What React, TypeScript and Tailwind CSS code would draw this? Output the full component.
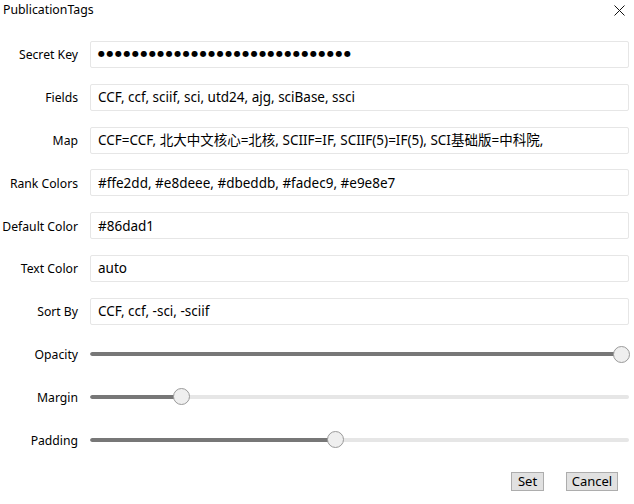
import React from "react";

const font = { fontFamily: '"Noto Sans", "Noto Sans CJK SC", sans-serif' };

function Field({ label, children }: { label: string; children: React.ReactNode }) {
  return (
    <div className="flex items-center h-[42.8px]">
      <div className="w-[78px] shrink-0 text-right text-[12.2px] pt-[2px] text-black whitespace-nowrap">{label}</div>
      <div className="ml-[12px] mr-[5px] flex-1 h-[27px] border border-[#e6e6e6] rounded-[2px] bg-white flex items-center px-[7px] text-[13.5px] text-black whitespace-nowrap overflow-hidden">
        {children}
      </div>
    </div>
  );
}

function Slider({ label, value }: { label: string; value: number }) {
  const center = 8 + value * 523;
  return (
    <div className="flex items-center h-[42.8px]">
      <div className="w-[78px] shrink-0 text-right text-[12.2px] pt-[2px] text-black whitespace-nowrap">{label}</div>
      <div className="ml-[12px] mr-[5px] flex-1 relative h-[18px] flex items-center">
        <div className="w-full h-[4px] rounded-full bg-[#e6e6e6] relative overflow-hidden">
          <div className="absolute left-0 top-0 h-full bg-[#777777] rounded-full" style={{ width: center }} />
        </div>
        <div
          className="absolute top-[0.5px] w-[17px] h-[17px] rounded-full bg-[#efefef] border border-[#9a9a9a]"
          style={{ left: center - 8.5 }}
        />
      </div>
    </div>
  );
}

export default function App() {
  const dots = "●".repeat(30);
  return (
    <div className="w-[634px] h-[504px] bg-white relative overflow-hidden" style={font}>
      <div className="h-[33.1px] flex items-start justify-between">
        <div className="pl-[3px] pt-[1px] text-[12.3px] text-black">PublicationTags</div>
        <svg className="mt-[5px] mr-[9px]" width="11" height="11" viewBox="0 0 11 11">
          <path d="M0.5 0.5 L10.5 10.5 M10.5 0.5 L0.5 10.5" stroke="#111" strokeWidth="1" fill="none" />
        </svg>
      </div>
      <Field label="Secret Key">
        <span className="text-[8px] tracking-[1.5px] leading-none" style={{ fontFamily: '"DejaVu Sans", sans-serif' }}>
          {dots}
        </span>
      </Field>
      <Field label="Fields">CCF, ccf, sciif, sci, utd24, ajg, sciBase, ssci</Field>
      <Field label="Map">CCF=CCF, 北大中文核心=北核, SCIIF=IF, SCIIF(5)=IF(5), SCI基础版=中科院,</Field>
      <Field label="Rank Colors">#ffe2dd, #e8deee, #dbeddb, #fadec9, #e9e8e7</Field>
      <Field label="Default Color">#86dad1</Field>
      <Field label="Text Color">auto</Field>
      <Field label="Sort By">CCF, ccf, -sci, -sciif</Field>
      <Slider label="Opacity" value={1} />
      <Slider label="Margin" value={0.159} />
      <Slider label="Padding" value={0.455} />
      <div className="flex justify-end gap-[22px] pr-[16px] mt-[10.6px]">
        <button className="w-[33px] h-[19px] bg-[#e1e1e1] border border-[#adadad] text-[13px] leading-none text-black flex items-center justify-center">
          Set
        </button>
        <button className="w-[52px] h-[19px] bg-[#e1e1e1] border border-[#adadad] text-[13px] leading-none text-black flex items-center justify-center">
          Cancel
        </button>
      </div>
    </div>
  );
}
